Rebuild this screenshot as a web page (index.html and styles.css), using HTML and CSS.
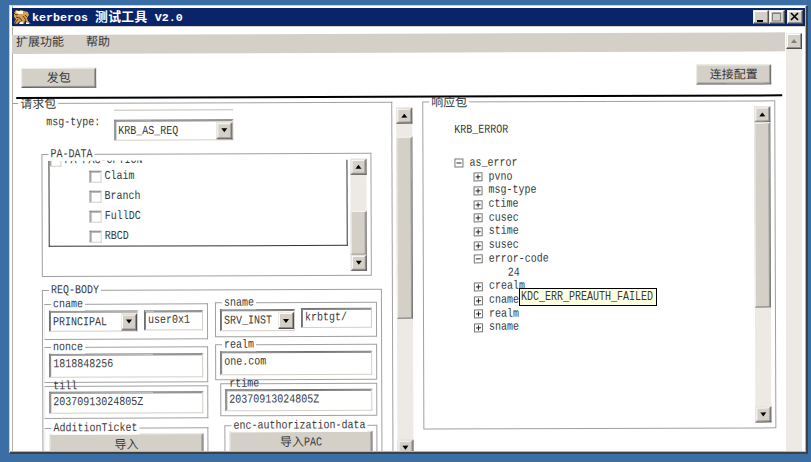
FILE: index.html
```html
<!DOCTYPE html>
<html lang="zh-CN">
<head>
<meta charset="utf-8">
<title>kerberos 测试工具 V2.0</title>
<link rel="stylesheet" href="styles.css">
</head>
<body>
<div class="window">
  <div class="titlebar">
    <svg class="logo" width="18" height="16" viewBox="0 0 18 16"><path d="M1 4l2-3 3 1 2-1 3 1 4 1 1 3-2 3 1 3 3 3-3-1-3-3-1 4-3-1-1-2-3 3-3-1 2-4-2-2z" fill="#d6a04f"/><path d="M3 2h7v3H4zM13 13l3 1v1h-3zM7 13h3v2H6z" fill="#fff6df"/><path d="M1 4l2 2 2-1M3 8l4 1 2 3M10 7l3 4M2 14l3-4M12 6l2 2" stroke="#5c3518" fill="none"/></svg>
    <span class="caption">kerberos <span class="cn">测试工具</span> V2.0</span>
    <div class="controls">
      <i class="btn"><svg width="15" height="14"><path d="M4 10h6v2H4z"/></svg></i>
      <i class="btn"><svg width="15" height="14"><path d="M3.5 3h8v8h-8zM3 3.5h9" fill="none" stroke="#808080"/></svg></i>
      <i class="btn close"><svg width="15" height="14"><path d="M4 3l7 7M11 3l-7 7" stroke="#000" stroke-width="1.7"/></svg></i>
    </div>
  </div>
  <div class="client">
    <div class="page">
      <div class="menubar"><span>扩展功能</span><span>帮助</span></div>
      <div class="toolbar"><div class="button">发包</div><div class="button">连接配置</div></div>
      <div class="rule"></div>
      <div class="columns">
        <div class="group request">
          <div class="legend cjk">请求包</div>
          <div class="cut"></div>
          <div class="msgtype"><span class="t">msg-type:</span><div class="combo"><span class="t">KRB_AS_REQ</span><i class="btn down"></i></div></div>
          <div class="group padata">
            <div class="legend"><span class="t">PA-DATA</span></div>
            <div class="options">
              <div class="opt parent"><i class="check"></i><span class="t">PA-PAC-OPTION</span></div>
              <div class="opt"><i class="check"></i><span class="t">Claim</span></div>
              <div class="opt"><i class="check"></i><span class="t">Branch</span></div>
              <div class="opt"><i class="check"></i><span class="t">FullDC</span></div>
              <div class="opt"><i class="check"></i><span class="t">RBCD</span></div>
            </div>
            <div class="scroll pa-scroll"><i class="btn up"></i><i class="thumb"></i><i class="btn down"></i></div>
          </div>
          <div class="group body">
            <div class="legend"><span class="t">REQ-BODY</span></div>
            <div class="col left">
              <div class="group field names"><div class="legend"><span class="t">cname</span></div><div class="combo principal"><span class="t">PRINCIPAL</span><i class="btn down"></i></div><div class="input"><span class="t">user0x1</span></div></div>
              <div class="group field"><div class="legend"><span class="t">nonce</span></div><div class="input tall"><span class="t">1818848256</span></div></div>
              <div class="group field till"><div class="legend"><span class="t">till</span></div><div class="input"><span class="t">20370913024805Z</span></div></div>
              <div class="group field import"><div class="legend"><span class="t">AdditionTicket</span></div><div class="button">导入</div></div>
            </div>
            <div class="col right">
              <div class="group field names"><div class="legend"><span class="t">sname</span></div><div class="combo srv"><span class="t">SRV_INST</span><i class="btn down"></i></div><div class="input"><span class="t">krbtgt/</span></div></div>
              <div class="group field"><div class="legend"><span class="t">realm</span></div><div class="input tall"><span class="t">one.com</span></div></div>
              <div class="group field till"><div class="legend"><span class="t">rtime</span></div><div class="input"><span class="t">20370913024805Z</span></div></div>
              <div class="group field import"><div class="legend"><span class="t">enc-authorization-data</span></div><div class="button">导入<span class="t">PAC</span></div></div>
            </div>
          </div>
        </div>
        <div class="scroll req-scroll"><i class="btn up"></i><i class="thumb"></i><i class="btn down"></i></div>
        <div class="group response">
          <div class="legend cjk">响应包</div>
          <div class="tree">
            <div class="heading"><span class="t">KRB_ERROR</span></div>
            <div class="node root"><i class="tog minus"></i><span class="t">as_error</span></div>
            <div class="node"><i class="tog"></i><span class="t">pvno</span></div>
            <div class="node"><i class="tog"></i><span class="t">msg-type</span></div>
            <div class="node"><i class="tog"></i><span class="t">ctime</span></div>
            <div class="node"><i class="tog"></i><span class="t">cusec</span></div>
            <div class="node"><i class="tog"></i><span class="t">stime</span></div>
            <div class="node"><i class="tog"></i><span class="t">susec</span></div>
            <div class="node"><i class="tog minus"></i><span class="t">error-code</span></div>
            <div class="node leaf"><span class="t">24</span></div>
            <div class="node"><i class="tog"></i><span class="t">crealm</span></div>
            <div class="node"><i class="tog"></i><span class="t">cname</span></div>
            <div class="node"><i class="tog"></i><span class="t">realm</span></div>
            <div class="node"><i class="tog"></i><span class="t">sname</span></div>
          </div>
          <div class="scroll res-scroll"><i class="btn up"></i><i class="thumb"></i><i class="btn down"></i></div>
        </div>
      </div>
    </div>
    <div class="scroll main-scroll"><i class="btn up disabled"></i></div>
    <div class="tooltip"><span class="t">KDC_ERR_PREAUTH_FAILED</span></div>
  </div>
</div>
</body>
</html>
```
FILE: styles.css
```css
* { box-sizing: border-box; }
body {
  margin: 0;
  height: 462px;
  padding: 5px 3px 0 9px;
  background: #3a6ea5;
  overflow: hidden;
  color: #383838;
  font: 10px "Liberation Mono", "Noto Sans CJK SC", monospace;
}
i { font-style: normal; display: block; flex: none; }
.t { display: inline-block; transform: scaleY(1.22); white-space: pre; line-height: 12px; }
.window {
  height: 449px;
  background: #fff;
  border: 1px solid #d4d0c8;
  border-right: 2px solid #404040;
  border-bottom: 2px solid #404040;
  padding: 2px 1px 0 2px;
  box-shadow: inset -1px -1px #b8b4ac, inset 2px 0 #fff, inset 3px 0 #b0aca6;
}
.titlebar {
  height: 18px;
  background: #0a246a;
  display: flex;
  align-items: center;
  padding: 0 2px 0 1px;
  color: #fff;
  box-shadow: 0 1px #d4d0c8;
}
.logo { flex: none; }
.caption { margin-left: 1px; font-size: 11.67px; font-weight: bold; white-space: pre; line-height: 16px; }
.cn { font: bold 12.8px/16px "Noto Sans CJK SC", sans-serif; letter-spacing: 0.4px; }
.controls { margin-left: auto; display: flex; }
.btn {
  width: 16px;
  height: 16px;
  background: #d4d0c8;
  border: 1px solid;
  border-color: #eeeae4 #505050 #505050 #eeeae4;
  box-shadow: inset -1px -1px #909090, inset 1px 1px #fff;
}
.controls .btn { height: 14px; }
.controls svg { display: block; margin: -1px; }
.controls .close { margin-left: 2px; }
.client { position: relative; height: 425px; display: flex; overflow: hidden; }
.page {
  flex: none;
  width: 773px;
  height: 450px;
  margin-top: 8.5px;
  transform: rotate(-0.2deg);
  transform-origin: 0 0;
}
.menubar {
  height: 19px;
  background: #d4d0c8;
  display: flex;
  gap: 22px;
  padding-left: 4px;
  font: 12px/12px "Noto Sans CJK SC", sans-serif;
}
.toolbar { display: flex; justify-content: space-between; padding: 14px 14px 0 9px; height: 43px; }
.button {
  width: 75px;
  height: 20px;
  background: #d4d0c8;
  border: 1px solid;
  border-color: #f0eee8 #666 #666 #f0eee8;
  box-shadow: inset -1px -1px #999;
  text-align: center;
  font: 12px/17px "Noto Sans CJK SC", sans-serif;
}
.toolbar .button { line-height: 15px; }
.toolbar .button:last-child { margin-top: -1px; }
.button .t { font: 10px/12px "Liberation Mono", monospace; position: relative; top: -1px; }
.rule { position: relative; z-index: 3; height: 2px; margin: 0 3px 0 4px; background: #000; }
.columns { display: flex; padding-top: 4px; }
.group { position: relative; border: 1px solid #a0a0a0; }
.legend { position: absolute; z-index: 1; top: -6px; left: 6px; height: 12px; line-height: 12px; padding: 0 2px; background: #fff; }
.legend.cjk { top: -8px; height: 14px; font: 12px/13px "Noto Sans CJK SC", sans-serif; z-index: 2; }
.request { width: 380px; height: 400px; border-left: 0; padding-top: 6px; }
.cut { width: 119px; height: 1px; margin-left: 102px; background: #c4bcb4; }
.msgtype { display: flex; align-items: flex-start; justify-content: space-between; margin: 9px 0 0 34px; width: 187px; }
.msgtype > .t { margin-top: -3px; }
.combo, .input {
  display: flex;
  align-items: center;
  justify-content: space-between;
  height: 21px;
  padding-left: 3px;
  background: #fff;
  border: 1px solid;
  border-color: #707070 #d4d0c8 #d4d0c8 #707070;
  box-shadow: inset 1px 1px #808080;
}
.combo .t { position: relative; top: 1px; }
.combo .btn { width: 16px; height: 17px; margin: 1px 0 0; }
.msgtype .combo { width: 119px; }
.btn.up, .btn.down { display: flex; align-items: center; justify-content: center; }
.btn.up::before, .btn.down::before { content: ""; border: 3.5px solid transparent; border-top-width: 0; border-bottom: 4px solid #000; }
.btn.down::before { border-bottom-width: 0; border-top: 4px solid #000; }
.btn.disabled::before { border-bottom-color: #808080; }
.scroll { width: 16px; background: #edeae5; display: flex; flex-direction: column; justify-content: space-between; flex: none; }
.thumb {
  background: #d4d0c8;
  border: 1px solid;
  border-color: #fff #777 #777 #eee;
  box-shadow: inset -1px 0 #999;
}
.padata { display: flex; width: 330px; height: 123px; margin: 13px 0 0 29px; padding: 6px 0 0 6px; }
.padata > .legend { left: 6px; }
.options { width: 299px; height: 86px; border: 1px solid #333; border-top: 0; overflow: hidden; }
.opt { height: 20px; display: flex; align-items: center; gap: 3px; padding-left: 40px; }
.opt.parent { margin-top: -6px; height: 12px; padding-left: 0; }
.check { width: 12px; height: 12px; border: 1px solid; border-color: #777 #d4d0c8 #d4d0c8 #777; box-shadow: inset 1px 1px #a8a8a8; }
.pa-scroll { height: 112px; margin: -1px 0 0 3px; }
.pa-scroll .thumb { height: 44px; margin-top: 36px; }
.body { display: flex; gap: 7px; width: 340px; height: 180px; margin: 13px 0 0 29px; padding: 13px 0 0 1px; }
.col { width: 164px; flex: none; }
.col.right { width: 162px; margin-top: -1px; }
.field { display: flex; height: 36px; padding: 6px 4px 0; margin-bottom: 7px; }
.left .field { border-left-color: #eee; }
.names .input { height: 20px; }
.principal { width: 89px; margin-right: 6px; }
.field .input { flex: 1; }
.srv { width: 75px; height: 22px; margin: 1px 6px 0 0; }
.right .names { padding-top: 5px; height: 35px; }
.input.tall { height: 24px; }
.input.tall .t { margin-top: -3px; }
.till { height: 33px; margin-top: -4px; padding-top: 5px; }
.till > .legend { background: none; }
.till .input { height: 22px; }
.right .till { margin-left: 5px; }
.right .import { margin-left: 9px; }
.import .button { flex: 1; height: 30px; }
.import { margin-top: 9px; padding-top: 5px; }
.req-scroll { height: 348px; margin: 6px 10px 0 4px; }
.req-scroll .thumb { height: 182px; margin: 13px 0 auto; }
.response { width: 353px; height: 328px; display: flex; justify-content: space-between; }
.response > .legend { left: 6px; }
.tree { padding: 22px 0 0 31px; }
.heading { height: 32px; }
.node { display: flex; align-items: center; height: 13.72px; padding-left: 19px; gap: 6px; }
.node.root { padding-left: 0; }
.node.leaf { padding-left: 53px; }
.tog { width: 9px; height: 9px; border: 1px solid #777; background: linear-gradient(#222, #222) 50% 50% / 5px 1px no-repeat, linear-gradient(#222, #222) 50% 50% / 1px 5px no-repeat; }
.tog.minus { background: linear-gradient(#222, #222) 50% 50% / 5px 1px no-repeat; }
.res-scroll { height: 316px; margin: 5px 4px 0 0; }
.res-scroll .thumb { height: 185px; margin-bottom: auto; }
.main-scroll { margin: 7px 0 0 1px; }
.tooltip {
  position: absolute;
  left: 507px;
  top: 262px;
  width: 138px;
  height: 18px;
  padding: 3px 0 0 1px;
  border: 1px solid #000;
  background: #ffffe1;
}
```
